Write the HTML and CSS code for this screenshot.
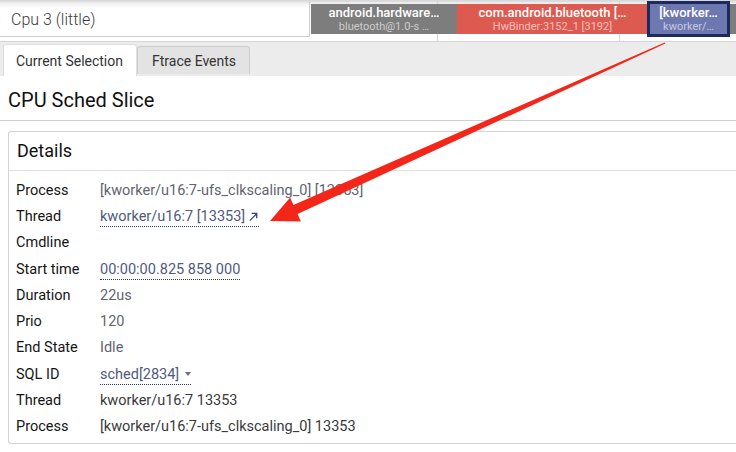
FILE: index.html
```html
<!DOCTYPE html>
<html>
<head>
<meta charset="utf-8">
<link rel="stylesheet" href="styles.css">
</head>
<body>
<div class="page">
  <div class="tracks">
    <div class="shell"><span class="shell-title">Cpu 3 (little)</span></div>
    <div class="track">
      <div class="slices">
        <div class="slice grey s1"><span class="t1">android.hardware…</span><span class="t2">bluetooth@1.0-s …</span></div>
        <div class="slice red s2"><span class="t1">com.android.bluetooth […</span><span class="t2">HwBinder:3152_1 [3192]</span></div>
        <div class="slice blue s3"><span class="t1">[kworker…</span><span class="t2">kworker/…</span></div>
        <div class="slice grey s4"></div>
      </div>
    </div>
  </div>

  <div class="tabbar">
    <div class="tab active">Current Selection</div>
    <div class="tab">Ftrace Events</div>
  </div>

  <div class="content">
    <h1 class="title">CPU Sched Slice</h1>
    <div class="details">
      <div class="details-head">Details</div>
      <div class="rows">
        <div class="lbl">Process</div><div class="val">[kworker/u16:7-ufs_clkscaling_0] [13353]</div>
        <div class="lbl">Thread</div><div class="val"><span class="link">kworker/u16:7 [13353]<svg class="ext" viewBox="0 0 12 12" width="11" height="11"><path d="M2 10.5 L9.5 3 M4 2.5 H9.5 V8" fill="none" stroke="#3a4170" stroke-width="1.4"/></svg></span></div>
        <div class="lbl">Cmdline</div><div class="val"></div>
        <div class="lbl">Start time</div><div class="val"><span class="link">00:00:00.825 858 000</span></div>
        <div class="lbl">Duration</div><div class="val">22us</div>
        <div class="lbl">Prio</div><div class="val">120</div>
        <div class="lbl">End State</div><div class="val">Idle</div>
        <div class="lbl">SQL ID</div><div class="val"><span class="link">sched[2834]<span class="caret"></span></span></div>
        <div class="lbl">Thread</div><div class="val dark">kworker/u16:7 13353</div>
        <div class="lbl">Process</div><div class="val dark">[kworker/u16:7-ufs_clkscaling_0] 13353</div>
      </div>
    </div>
  </div>

  <svg class="annot" width="736" height="452" viewBox="0 0 736 452">
    <polygon points="270,221 300.8,221.4 297.6,214.1 665.3,43.6 664.7,42.4 293.4,204.9 290.2,197.6" fill="#f4261a"/>
  </svg>
</div>
</body>
</html>
```

FILE: styles.css
```css
html, body {
  margin: 0;
  padding: 0;
  background: #fff;
}
body {
  font-family: Roboto, "Noto Sans", sans-serif;
  color: #222;
  width: 736px;
  height: 452px;
  overflow: hidden;
}
.page {
  position: relative;
  width: 736px;
  height: 452px;
}

/* ---- track strip ---- */
.tracks {
  display: flex;
  height: 42px;
  background: linear-gradient(#d4d4d4 0px, #f4f4f4 4px, #fff 9px);
  border-bottom: 1px solid #d6d6d6;
  box-sizing: border-box;
}
.shell {
  width: 310px;
  height: 37px;
  border-bottom: 1px solid #cfcfcf;
  border-right: 1px solid #cfcfcf;
  box-sizing: border-box;
  display: flex;
  align-items: center;
  padding-left: 11px;
}
.shell-title {
  font-size: 16px;
  font-weight: 300;
  color: #3c3c3c;
  padding-top: 2px;
}
.track {
  flex: 1;
  background:
    linear-gradient(90deg, transparent 127px, #d8d8d8 127px, #d8d8d8 128px, transparent 128px, transparent 309px, #d8d8d8 309px, #d8d8d8 310px, transparent 310px);
}
.slices {
  display: flex;
  margin-top: 4px;
  height: 30px;
}
.slice {
  display: flex;
  flex-direction: column;
  align-items: center;
  justify-content: center;
  overflow: hidden;
  white-space: nowrap;
  color: #fff;
  box-sizing: border-box;
}
.slice .t1 {
  font-size: 13px;
  font-weight: 500;
  line-height: 14px;
}
.slice .t2 {
  font-size: 11px;
  line-height: 13px;
  color: rgba(255,255,255,0.62);
}
.grey { background: #7d7d7d; }
.red { background: #dd5a50; }
.blue { background: #6e78b0; }
.s1 { width: 146px; margin-left: 1px; }
.s2 { width: 191px; }
.s3 {
  width: 77px;
  margin-left: 2px;
  margin-right: 3px;
  outline: 3px solid #1e2a5e;
  position: relative;
  z-index: 1;
}
.s4 { flex: 1; }

/* ---- tabs ---- */
.tabbar {
  display: flex;
  align-items: flex-end;
  height: 34px;
  background: #ececec;
  padding-left: 3px;
  box-sizing: border-box;
}
.tab {
  font-size: 14px;
  color: #333;
  height: 28px;
  padding: 0 14px;
  display: flex;
  align-items: center;
  white-space: nowrap;
  background: #e3e3e3;
  border: 1px solid #cdcdcd;
  border-bottom: none;
  border-radius: 3px 3px 0 0;
  box-sizing: border-box;
  margin-bottom: 2px;
  width: 113px;
}
.tab.active {
  background: #fff;
  height: 32px;
  margin-bottom: 0;
  padding: 0 12px;
  border-color: #dedede;
  width: 134px;
}

/* ---- content ---- */
.content {
  padding-top: 11px;
}
.title {
  margin: 0;
  font-size: 20px;
  font-weight: 400;
  line-height: 26px;
  color: #111;
  padding: 0 8px 7px 8px;
  border-bottom: 1px solid #cfcfcf;
}
.details {
  margin: 10px 0 0 8px;
  border: 1px solid #d4d4d4;
  border-right: none;
  border-radius: 3px 0 0 3px;
  height: 313px;
  box-sizing: border-box;
}
.details-head {
  font-size: 18px;
  line-height: 38px;
  height: 39px;
  padding-left: 8px;
  color: #111;
  border-bottom: 1px solid #e2e2e2;
  box-sizing: border-box;
}
.rows {
  display: grid;
  grid-template-columns: 84px 1fr;
  grid-auto-rows: 26.3px;
  padding: 6px 0 0 7px;
  font-size: 14.5px;
  align-items: center;
}
.lbl {
  color: #151515;
}
.val {
  color: #5f6470;
  white-space: nowrap;
}
.val.dark {
  color: #3a3a3a;
}
.link {
  color: #4f5a7e;
  border-bottom: 1px dotted #2a3580;
  padding-bottom: 1px;
}
.ext {
  margin-left: 3px;
  vertical-align: -1px;
}
.caret {
  display: inline-block;
  margin-left: 6px;
  width: 0;
  height: 0;
  border-left: 3.5px solid transparent;
  border-right: 3.5px solid transparent;
  border-top: 4px solid #6a6f80;
  vertical-align: 3px;
}
.annot {
  position: absolute;
  left: 0;
  top: 0;
  pointer-events: none;
}
```
